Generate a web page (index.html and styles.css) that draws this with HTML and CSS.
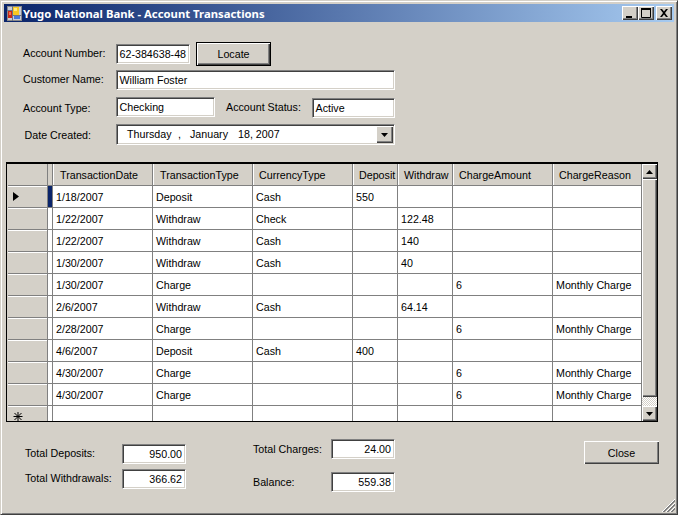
FILE: index.html
```html
<!DOCTYPE html>
<html lang="en">
<head>
<meta charset="utf-8">
<title>Yugo National Bank - Account Transactions</title>
<link rel="stylesheet" href="styles.css">
</head>
<body>
<div class="window">
  <header class="titlebar">
    <svg class="app-icon" width="15" height="15" viewBox="0 0 15 15">
      <rect x="0.5" y="0.5" width="14" height="14" fill="#c8ccd8" stroke="#8a8a8a"/>
      <path d="M0 4.500h5M5.500 0v15M5.500 9.500h9" stroke="#6a7288" fill="none"/>
      <rect x="6" y="1" width="6" height="8" fill="#f8c820"/>
      <rect x="7" y="2" width="3" height="3" fill="#ffe880"/>
      <rect x="1" y="5" width="4" height="7" fill="#c82818"/>
      <rect x="2" y="6" width="2" height="3" fill="#f07050"/>
      <rect x="7" y="10" width="6" height="3" fill="#4878d8"/>
    </svg>
    <span class="title">Yugo National Bank - Account Transactions</span>
    <div class="caption-buttons">
      <button class="cap-btn" aria-label="Minimize"><svg width="16" height="14" viewBox="0 0 16 14"><rect x="4" y="10" width="6" height="2" fill="#000"/></svg></button>
      <button class="cap-btn" aria-label="Maximize"><svg width="16" height="14" viewBox="0 0 16 14"><path d="M3.500 2.500h9v9h-9z" fill="none" stroke="#000"/><rect x="3" y="2" width="10" height="2" fill="#000"/></svg></button>
      <button class="cap-btn cap-close" aria-label="Close"><svg width="16" height="14" viewBox="0 0 16 14"><path d="M4 3l2 0 2 2.500 2-2.500 2 0-3 4 3 4-2 0-2-2.500-2 2.500-2 0 3-4z" fill="#000"/></svg></button>
    </div>
  </header>

  <section class="fields">
    <div class="row row-account">
      <label class="lbl">Account Number:</label>
      <div class="field f-number">62-384638-48</div>
      <button class="btn btn-default">Locate</button>
    </div>
    <div class="row row-customer">
      <label class="lbl">Customer Name:</label>
      <div class="field f-wide">William Foster</div>
    </div>
    <div class="row row-type">
      <label class="lbl">Account Type:</label>
      <div class="field f-type">Checking</div>
      <label class="lbl lbl-status">Account Status:</label>
      <div class="field f-status">Active</div>
    </div>
    <div class="row row-date">
      <label class="lbl lbl-date">Date Created:</label>
      <div class="field f-wide f-date">
        <span class="d-day">Thursday</span><span class="d-comma">,</span><span class="d-month">January</span><span class="d-rest">18, 2007</span>
        <span class="combo-btn"><svg width="7" height="4" viewBox="0 0 7 4"><path d="M0 0h7L3.500 4z" fill="#000"/></svg></span>
      </div>
    </div>
  </section>

  <section class="datagrid">
    <div class="grid-body">
      <table class="gridtable">
        <colgroup>
          <col class="c-rh"><col class="c-ind"><col class="c-100"><col class="c-100"><col class="c-100"><col class="c-dep"><col class="c-wd"><col class="c-100"><col class="c-reason">
        </colgroup>
        <thead>
          <tr><th class="rh"></th><th class="ind"></th><th>TransactionDate</th><th>TransactionType</th><th>CurrencyType</th><th>Deposit</th><th>Withdraw</th><th>ChargeAmount</th><th>ChargeReason</th></tr>
        </thead>
        <tbody>
          <tr class="current"><td class="rh"><svg class="arrow" width="6" height="9" viewBox="0 0 6 9"><path d="M0 0l6 4.500-6 4.500z" fill="#000"/></svg></td><td class="ind"></td><td>1/18/2007</td><td>Deposit</td><td>Cash</td><td>550</td><td></td><td></td><td></td></tr>
          <tr><td class="rh"></td><td class="ind"></td><td>1/22/2007</td><td>Withdraw</td><td>Check</td><td></td><td>122.48</td><td></td><td></td></tr>
          <tr><td class="rh"></td><td class="ind"></td><td>1/22/2007</td><td>Withdraw</td><td>Cash</td><td></td><td>140</td><td></td><td></td></tr>
          <tr><td class="rh"></td><td class="ind"></td><td>1/30/2007</td><td>Withdraw</td><td>Cash</td><td></td><td>40</td><td></td><td></td></tr>
          <tr><td class="rh"></td><td class="ind"></td><td>1/30/2007</td><td>Charge</td><td></td><td></td><td></td><td>6</td><td>Monthly Charge</td></tr>
          <tr><td class="rh"></td><td class="ind"></td><td>2/6/2007</td><td>Withdraw</td><td>Cash</td><td></td><td>64.14</td><td></td><td></td></tr>
          <tr><td class="rh"></td><td class="ind"></td><td>2/28/2007</td><td>Charge</td><td></td><td></td><td></td><td>6</td><td>Monthly Charge</td></tr>
          <tr><td class="rh"></td><td class="ind"></td><td>4/6/2007</td><td>Deposit</td><td>Cash</td><td>400</td><td></td><td></td><td></td></tr>
          <tr><td class="rh"></td><td class="ind"></td><td>4/30/2007</td><td>Charge</td><td></td><td></td><td></td><td>6</td><td>Monthly Charge</td></tr>
          <tr><td class="rh"></td><td class="ind"></td><td>4/30/2007</td><td>Charge</td><td></td><td></td><td></td><td>6</td><td>Monthly Charge</td></tr>
          <tr class="newrow"><td class="rh"><svg class="star" width="10" height="9" viewBox="0 0 10 9"><path d="M5 0v9M0.500 4.500h9M1.500 1l7 7M8.500 1l-7 7" stroke="#000" fill="none"/></svg></td><td class="ind"></td><td></td><td></td><td></td><td></td><td></td><td></td><td></td></tr>
        </tbody>
      </table>
      <div class="scrollbar">
        <div class="sb-btn"><svg width="7" height="4" viewBox="0 0 7 4"><path d="M0 4h7L3.500 0z" fill="#000"/></svg></div>
        <div class="sb-thumb"></div>
        <div class="sb-track"></div>
        <div class="sb-btn"><svg width="7" height="4" viewBox="0 0 7 4"><path d="M0 0h7L3.500 4z" fill="#000"/></svg></div>
      </div>
    </div>
  </section>

  <section class="totals">
    <div class="tot-col tot-left">
      <div class="tot-row"><label class="lbl tot-lbl">Total Deposits:</label><div class="field num">950.00</div></div>
      <div class="tot-row"><label class="lbl tot-lbl">Total Withdrawals:</label><div class="field num">366.62</div></div>
    </div>
    <div class="tot-col tot-mid">
      <div class="tot-row"><label class="lbl tot-lbl">Total Charges:</label><div class="field num">24.00</div></div>
      <div class="tot-row"><label class="lbl tot-lbl">Balance:</label><div class="field num">559.38</div></div>
    </div>
    <button class="btn btn-close">Close</button>
  </section>

  <svg class="grip" width="13" height="13" viewBox="0 0 13 13">
    <path d="M13 1L1 13M13 5L5 13M13 9L9 13" stroke="#808080" fill="none"/>
    <path d="M13 2L2 13M13 6L6 13M13 10L10 13" stroke="#808080" fill="none"/>
    <path d="M13 0L0 13M13 4L4 13M13 8L8 13" stroke="#ffffff" fill="none"/>
  </svg>
</div>
</body>
</html>
```

FILE: styles.css
```css
html, body {
  margin: 0;
  padding: 0;
  background: #d4d0c8;
}
* { box-sizing: border-box; }

.window {
  position: relative;
  width: 678px;
  height: 515px;
  background: #d4d0c8;
  padding: 4px 4px 0;
  border: 1px solid;
  border-color: #d4d0c8 #404040 #404040 #d4d0c8;
  box-shadow: inset 1px 1px 0 #fff, inset -1px -1px 0 #808080;
  font: 10.7px "Liberation Sans", Arial, sans-serif;
  color: #000;
  margin: 0;
}

/* title bar */
.titlebar {
  height: 18px;
  margin: -1px 0 0 -1px;
  width: 670px;
  display: flex;
  align-items: center;
  background: linear-gradient(to right, #0a246a, #a6caf0);
  padding: 0 2px 0 3px;
}
.app-icon { flex: none; }
.title {
  margin-left: 1px;
  color: #fff;
  font: bold 11.3px "Noto Sans", "DejaVu Sans", sans-serif;
  white-space: nowrap;
}
.caption-buttons {
  margin-left: auto;
  display: flex;
}
.cap-btn {
  width: 16px;
  height: 14px;
  padding: 0;
  display: block;
  background: #d4d0c8;
  border: 0;
  box-shadow: inset 1px 1px 0 #fff, inset -1px -1px 0 #404040, inset -2px -2px 0 #808080;
}
.cap-btn svg { display: block; }
.cap-close { margin-left: 2px; }

/* form fields */
.fields {
  margin-top: 20px;
  padding-left: 18px;
}
.row {
  display: flex;
  align-items: center;
}
.lbl { white-space: nowrap; }
.row > .lbl:first-child { width: 93px; flex: none; }
.row-account { height: 24px; }
.row-customer { height: 20px; margin-top: 4px; }
.row-type { height: 21px; margin-top: 7px; }
.row-date { height: 21px; margin-top: 6px; }
.lbl-date { padding-left: 1.500px; }
.row-account > .lbl, .row-customer > .lbl { padding-bottom: 2px; }

.field {
  height: 20px;
  background: #fff;
  border: 1px solid;
  border-color: #808080 #fff #fff #808080;
  box-shadow: inset 1px 1px 0 #404040, inset -1px -1px 0 #d4d0c8;
  padding: 0 2px 0 2.500px;
  line-height: 18px;
  white-space: nowrap;
  overflow: hidden;
}
.f-number { width: 74px; }
.f-wide { width: 279px; }
.f-type { width: 99px; height: 20px; align-self: flex-start; }
.lbl-status { margin-left: 11px; width: 86px; padding-bottom: 2px; }
.f-status { width: 83px; margin-top: 1px; }
.f-date {
  height: 21px;
  position: relative;
  padding-left: 10px;
  line-height: 19px;
  display: flex;
}
.d-day { width: 51px; }
.d-comma { width: 12px; }
.d-month { width: 48px; }
.d-rest { flex: none; }
.combo-btn {
  position: absolute;
  right: 1px;
  top: 1px;
  width: 17px;
  height: 17px;
  background: #d4d0c8;
  box-shadow: inset 1px 1px 0 #fff, inset -1px -1px 0 #404040, inset -2px -2px 0 #808080;
  display: flex;
  align-items: center;
  justify-content: center;
}
.combo-btn svg { display: block; }

.btn {
  height: 24px;
  width: 75px;
  padding: 0;
  font: 10.7px "Liberation Sans", Arial, sans-serif;
  color: #000;
  background: #d4d0c8;
  border: 0;
  box-shadow: inset 1px 1px 0 #fff, inset -1px -1px 0 #404040, inset -2px -2px 0 #808080;
}
.btn-default {
  margin-left: 6px;
  border: 1px solid #000;
}

/* data grid */
.datagrid {
  margin-top: 17px;
  margin-left: 1px;
  width: 652px;
  height: 260px;
  border: 1px solid #000;
  border-top-width: 2px;
  padding: 0 0 0 1px;
}
.grid-body {
  display: flex;
  height: 257px;
  overflow: hidden;
  background: #d4d0c8;
}
.gridtable {
  table-layout: fixed;
  width: 634px;
  flex: none;
  border-collapse: separate;
  border-spacing: 0;
  background: #fff;
  height: 257px;
}
.c-rh { width: 40px; }
.c-ind { width: 5px; }
.c-100 { width: 100px; }
.c-dep { width: 45px; }
.c-wd { width: 55px; }
.c-reason { width: 89px; }

.gridtable th {
  height: 22px;
  background: #d4d0c8;
  font-weight: normal;
  text-align: left;
  padding: 0 0 0 7px;
  border-bottom: 1px solid #808080;
  border-right: 1px solid #808080;
  white-space: nowrap;
  overflow: hidden;
  box-shadow: inset 1px 0 0 #fff;
}
.gridtable th:nth-child(n+5) { padding-left: 6px; }
.gridtable th.rh, .gridtable th.ind { padding: 0; box-shadow: none; }
.gridtable td {
  height: 22px;
  padding: 0 0 0 3px;
  border-bottom: 1px solid #808080;
  border-right: 1px solid #808080;
  white-space: nowrap;
  overflow: hidden;
}
.gridtable td.rh {
  background: #d4d0c8;
  padding: 0 0 0 5px;
  box-shadow: inset 0 1px 0 #fff;
}
.gridtable td.ind { padding: 0; }
.current td.ind { background: #0a246a; }
.arrow { display: block; }
.newrow td { height: 15px; border-bottom: 0; }
.newrow td.rh { vertical-align: top; }
.star { display: block; margin-top: 6px; }

.scrollbar {
  flex: 1;
  display: flex;
  flex-direction: column;
  min-width: 0;
}
.sb-btn {
  height: 15px;
  flex: none;
  background: #d4d0c8;
  box-shadow: inset 1px 1px 0 #fff, inset -1px -1px 0 #404040, inset -2px -2px 0 #808080;
  display: flex;
  align-items: center;
  justify-content: center;
}
.sb-btn svg { display: block; }
.sb-thumb {
  height: 218px;
  flex: none;
  background: #d4d0c8;
  box-shadow: inset 1px 1px 0 #fff, inset -1px -1px 0 #404040, inset -2px -2px 0 #808080;
}
.sb-track {
  flex: 1;
  background-color: #fff;
  background-image: conic-gradient(#d4d0c8 25%, #fff 0 50%, #d4d0c8 0 75%, #fff 0);
  background-size: 2px 2px;
}

/* totals */
.totals {
  position: relative;
  display: flex;
  margin-top: 17px;
  padding-left: 20px;
}
.tot-col { display: flex; flex-direction: column; flex: none; }
.tot-row { display: flex; align-items: center; height: 20px; }
.tot-left { width: 228px; margin-top: 5px; row-gap: 5px; }
.tot-left .tot-lbl { width: 97px; flex: none; padding-bottom: 2px; }
.tot-mid { width: 143px; row-gap: 13px; }
.tot-mid .tot-lbl { width: 78px; flex: none; }
.num { width: 64px; text-align: right; padding-right: 3px; }
.btn-close {
  height: 23px;
  margin-left: 188px;
  margin-top: 2px;
}

.grip {
  position: absolute;
  right: 2px;
  bottom: 2px;
}
```
